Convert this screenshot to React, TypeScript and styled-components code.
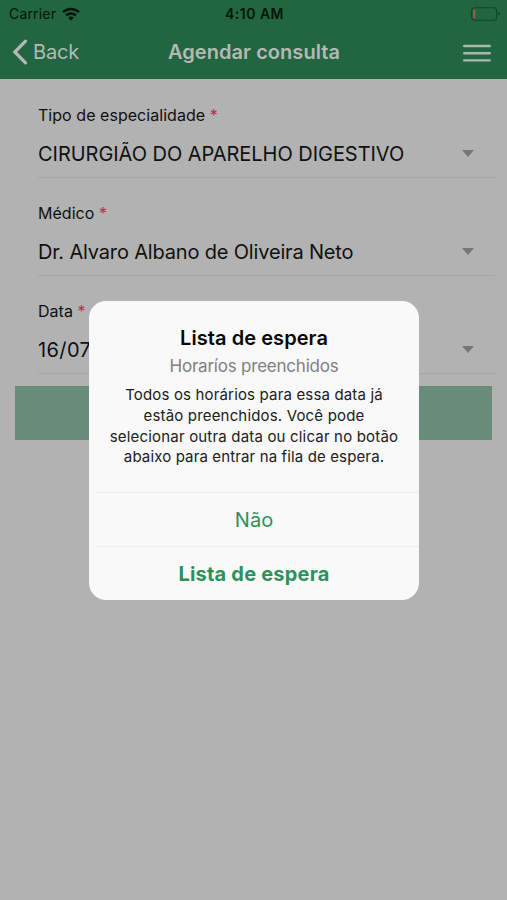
import React from "react";
import styled, { createGlobalStyle } from "styled-components";

const GlobalStyle = createGlobalStyle`
  * { box-sizing: border-box; }
  body { margin: 0; background: #b2b2b2; }
  button { border: 0; padding: 0; background: none; font: inherit; color: inherit; }
`;

const Screen = styled.div`
  position: relative;
  display: flex;
  flex-direction: column;
  width: 507px;
  height: 900px;
  overflow: hidden;
  background: #b2b2b2;
  color: #101010;
  font-family: Inter, "Liberation Sans", sans-serif;
`;

const Header = styled.header`
  height: 79px;
  background: #216640;
`;

const StatusBar = styled.div`
  display: grid;
  grid-template-columns: 1fr auto 1fr;
  align-items: center;
  height: 27px;
  padding: 0 6px 0 9px;
  color: #03150a;
`;

const Carrier = styled.div`
  display: flex;
  align-items: center;
  gap: 6px;
  font-size: 14px;
  letter-spacing: 0.18px;
`;

const Clock = styled.div`
  font-size: 14px;
  font-weight: 600;
  letter-spacing: 0.5px;
  margin-right: 1px;
`;

const Battery = styled.svg`
  justify-self: end;
`;

const NavBar = styled.div`
  display: grid;
  grid-template-columns: 1fr auto 1fr;
  align-items: center;
  height: 50px;
  padding: 0 15px 0 12px;
  color: #b4b9b5;
`;

const BackButton = styled.button`
  display: flex;
  align-items: center;
  gap: 5px;
  font-size: 20px;
  letter-spacing: -0.15px;
`;

const Title = styled.h1`
  margin: 0 0 0 4px;
  font-size: 20px;
  font-weight: 600;
  letter-spacing: 0.05px;
`;

const MenuButton = styled.button`
  display: flex;
  justify-self: end;
  padding-top: 1px;
`;

const Form = styled.main`
  display: flex;
  flex-direction: column;
  padding: 0 12px 0 38px;
`;

const Field = styled.div`
  display: flex;
  flex-direction: column;
  height: 98px;
  padding-top: 24px;
  border-bottom: 1px solid #a5a5a5;

  &:first-child {
    height: 99px;
    padding-top: 25px;
  }
`;

const Label = styled.label`
  font-size: 16px;
  line-height: 22px;
  letter-spacing: 0.04px;
`;

const Required = styled.span`
  color: #b5304a;
`;

const Value = styled.div<{ $spacing: number }>`
  display: flex;
  align-items: center;
  justify-content: space-between;
  height: 28px;
  margin-top: 14px;
  padding-right: 21px;
  font-size: 20px;
  letter-spacing: ${(p) => p.$spacing}px;

  svg {
    margin-bottom: 2px;
  }
`;

const Submit = styled.button`
  height: 54px;
  margin: 12px 15px 0;
  background: #698c7a;
`;

const Dialog = styled.section`
  position: absolute;
  top: 301px;
  left: 89px;
  display: flex;
  flex-direction: column;
  width: 330px;
  height: 299px;
  border-radius: 17px;
  overflow: hidden;
  background: #f9f9f9;
  text-align: center;
`;

const DialogBody = styled.div`
  height: 191px;
  padding-top: 24px;
`;

const DialogTitle = styled.h2`
  margin: 0;
  color: #080808;
  font-size: 20px;
  line-height: 26px;
  font-weight: 600;
  letter-spacing: 0.07px;
`;

const DialogSubtitle = styled.div`
  margin-top: 4px;
  color: #808080;
  font-size: 17px;
  line-height: 22px;
  letter-spacing: -0.22px;
`;

const Message = styled.p`
  margin: 8px 0 0;
  color: #202020;
  font-size: 15px;
  line-height: 20.8px;
`;

const Line = styled.span<{ $spacing: number }>`
  display: block;
  white-space: nowrap;
  letter-spacing: ${(p) => p.$spacing}px;
`;

const Action = styled.button<{ $strong?: boolean }>`
  height: 54px;
  margin-left: 7px;
  padding-right: 7px;
  border-top: 1px solid #ececec;
  color: #2b915b;
  font-size: 20px;
  font-weight: ${(p) => (p.$strong ? 700 : 400)};
  letter-spacing: ${(p) => (p.$strong ? 0.2 : 0)}px;
`;

const fields = [
  { label: "Tipo de especialidade", value: "CIRURGIÃO DO APARELHO DIGESTIVO", spacing: -0.04 },
  { label: "Médico", value: "Dr. Alvaro Albano de Oliveira Neto", spacing: -0.17 },
  { label: "Data", value: "16/07/2019", spacing: 0.4 },
];

const message = [
  { text: "Todos os horários para essa data já", spacing: 0.16 },
  { text: "estão preenchidos. Você pode", spacing: 0.17 },
  { text: "selecionar outra data ou clicar no botão", spacing: 0.18 },
  { text: "abaixo para entrar na fila de espera.", spacing: 0.13 },
];

export default function App() {
  return (
    <Screen>
      <GlobalStyle />
      <Header>
        <StatusBar>
          <Carrier>
            Carrier
            <svg width="18" height="14" viewBox="0 0 18 14" fill="none" stroke="currentColor" strokeWidth="2.5">
              <path d="M1 5.2C5.4.9 12.6.9 17 5.2" />
              <path d="M4 8.4c2.8-2.7 7.2-2.7 10 0" />
              <path d="M6.2 10.7c1.6-1.5 4-1.5 5.6 0L9 13.5z" fill="currentColor" stroke="none" />
            </svg>
          </Carrier>
          <Clock>4:10 AM</Clock>
          <Battery width="30" height="14" viewBox="0 0 30 14" fill="none">
            <rect x="0.7" y="0.7" width="25" height="12.5" rx="3" stroke="#124326" strokeWidth="1.1" />
            <rect x="2" y="2.4" width="2.4" height="9" rx="0.8" fill="#8c5d40" />
            <path d="M27.3 4.8c2.2.8 2.2 3.4 0 4.2z" fill="#124326" />
          </Battery>
        </StatusBar>
        <NavBar>
          <BackButton>
            <svg width="16" height="26" viewBox="0 0 16 26" fill="none" stroke="currentColor" strokeWidth="3.2" strokeLinecap="round">
              <path d="M13.5 2.2 2.8 13l10.7 10.8" />
            </svg>
            Back
          </BackButton>
          <Title>Agendar consulta</Title>
          <MenuButton aria-label="Menu">
            <svg width="30" height="20" viewBox="0 0 30 20" stroke="#a5b9ac" strokeWidth="2.4" strokeLinecap="round">
              <path d="M2.2 3h25.6M2.2 10.2h25.6M2.2 17.4h25.6" />
            </svg>
          </MenuButton>
        </NavBar>
      </Header>
      <Form>
        {fields.map((f) => (
          <Field key={f.label}>
            <Label>
              {f.label} <Required>*</Required>
            </Label>
            <Value $spacing={f.spacing}>
              {f.value}
              <svg width="12" height="7" viewBox="0 0 12 7" fill="#777">
                <path d="M0 0h12L6 7z" />
              </svg>
            </Value>
          </Field>
        ))}
      </Form>
      <Submit aria-label="Agendar" />
      <Dialog role="dialog">
        <DialogBody>
          <DialogTitle>Lista de espera</DialogTitle>
          <DialogSubtitle>Horaríos preenchidos</DialogSubtitle>
          <Message>
            {message.map((l) => (
              <Line key={l.text} $spacing={l.spacing}>
                {l.text}
              </Line>
            ))}
          </Message>
        </DialogBody>
        <Action>Não</Action>
        <Action $strong>Lista de espera</Action>
      </Dialog>
    </Screen>
  );
}
